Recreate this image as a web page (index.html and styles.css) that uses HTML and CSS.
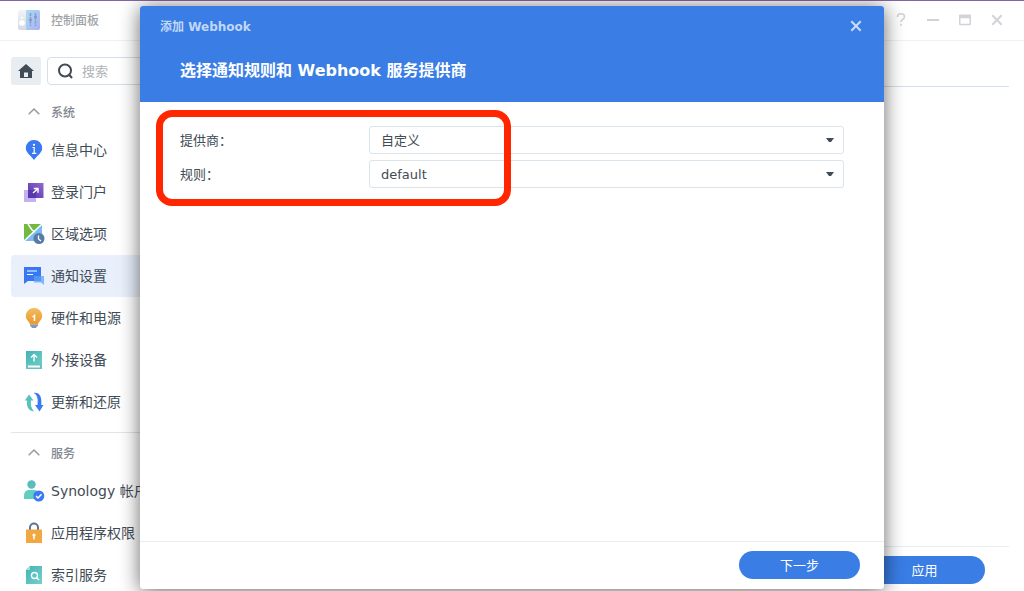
FILE: index.html
```html
<!DOCTYPE html>
<html lang="zh-CN">
<head>
<meta charset="utf-8">
<meta name="viewport" content="width=device-width, initial-scale=1">
<title>控制面板</title>
<link rel="stylesheet" href="styles.css">
</head>
<body>
<div class="window">
  <header class="titlebar">
    <svg class="app-icon" viewBox="0 0 22 20" aria-hidden="true">
      <defs>
        <linearGradient id="panel" x1="0" y1="0" x2="1" y2="1"><stop offset="0" stop-color="#a9ddf2"/><stop offset="1" stop-color="#a9b1f2"/></linearGradient>
        <linearGradient id="plate" x1="0" y1="0" x2="0" y2="1"><stop offset="0" stop-color="#f2f4f8"/><stop offset="1" stop-color="#d5d9e4"/></linearGradient>
      </defs>
      <rect width="22" height="20" rx="2" fill="url(#plate)"/>
      <path d="M8 0h12a2 2 0 0 1 2 2v16a2 2 0 0 1-2 2H8z" fill="url(#panel)"/>
      <circle cx="4" cy="13" r="2.800" fill="#fff"/><circle cx="4" cy="8" r="1" fill="#fff"/>
      <path d="M12.500 3v13M17.500 3v13" stroke="#8f9bc9" stroke-width="1.600" stroke-dasharray="3 .8" fill="none"/>
      <path d="M11 10h3M16 7h3" stroke="#8390c2" stroke-width="1.500" fill="none"/>
    </svg>
    <h1 class="app-title">控制面板</h1>
    <div class="window-controls">
      <button type="button" aria-label="帮助"><svg viewBox="0 0 14 14"><path d="M3.500 4Q3.500 .8 7 .8t3.500 2.700Q10.500 5.500 8.500 6.500 7 7.500 7 9M7 10.800v2" stroke-width="1.600"/></svg></button>
      <button type="button" aria-label="最小化"><svg viewBox="0 0 14 14"><path d="M1 7h12"/></svg></button>
      <button type="button" aria-label="最大化"><svg viewBox="0 0 14 14"><rect x="1.750" y="2.500" width="10.500" height="9" rx=".5" stroke-width="1.500"/><path d="M1 3.500h12" stroke-width="3.500"/></svg></button>
      <button type="button" aria-label="关闭"><svg viewBox="0 0 14 14"><path d="M2.300 2.300l9.400 9.400M11.700 2.300l-9.400 9.400"/></svg></button>
    </div>
  </header>

  <div class="workspace">
    <nav class="sidebar">
      <div class="toolbar">
        <button class="home" type="button" aria-label="主页"><svg viewBox="0 0 16 14"><path d="M8 0l8 7h-2v7H2V7H0z" fill="#414b55"/><path d="M6 8.500h4V13H6z" fill="#e8edf1"/></svg></button>
        <label class="search">
          <svg viewBox="0 0 16 16" aria-hidden="true"><circle cx="7" cy="7.500" r="6" fill="none" stroke="#414b55" stroke-width="2"/><path d="M10.500 11l3.500 4" stroke="#414b55" stroke-width="2"/></svg>
          <input type="text" placeholder="搜索" aria-label="搜索">
        </label>
      </div>

      <section class="group">
        <button class="group-title" type="button"><svg viewBox="0 0 12 7" aria-hidden="true"><path d="M.7 6.300L6 1l5.300 5.300" fill="none" stroke="#939aa1" stroke-width="1.500"/></svg><span>系统</span></button>
        <a class="item" href="#info">
          <svg viewBox="0 0 20 20" aria-hidden="true"><path d="M10 0a8 8 0 0 1 8.200 8C18.200 13 13 15.500 10 20 7 15.500 1.800 13 1.800 8A8 8 0 0 1 10 0z" fill="#3b78f2"/><circle cx="10" cy="4.800" r="1.100" fill="#fff"/><path d="M8.500 7.500h1.700V13M8 13.300h4.300" fill="none" stroke="#fff" stroke-width="1.200"/></svg>
          <span>信息中心</span></a>
        <a class="item" href="#portal">
          <svg viewBox="0 0 20 20" aria-hidden="true"><defs><linearGradient id="violet" x1="0" y1="1" x2="1" y2="0"><stop offset="0" stop-color="#5034aa"/><stop offset="1" stop-color="#9668cf"/></linearGradient></defs><path d="M0 8h12v12H0z" fill="#c5b0f4"/><path d="M4 1h15.500v15H4z" fill="url(#violet)"/><path d="M4 8h8v8H4z" fill="#5639ad"/><path d="M9 11l5-4.500M9.800 6.500H14v4.200" fill="none" stroke="#fff" stroke-width="1.400"/></svg>
          <span>登录门户</span></a>
        <a class="item" href="#region">
          <svg viewBox="0 0 20 20" aria-hidden="true"><path d="M0 0h18v17H0z" fill="#7dbcf3"/><path d="M0 17V0h18z" fill="#72b93f"/><path d="M0 17L18 0M4 0l4 6 3 2" fill="none" stroke="#fff" stroke-width="1.500"/><circle cx="15" cy="14.500" r="5.500" fill="#587ba5"/><path d="M14.500 11.500V15l2.500 2" fill="none" stroke="#fff" stroke-width="1.300"/></svg>
          <span>区域选项</span></a>
        <a class="item selected" href="#notify" aria-current="page">
          <svg viewBox="0 0 20 20" aria-hidden="true"><path d="M0 1h17v14H4l-4 3z" fill="#3978f3"/><path d="M3 5h10M3 8.500h6" stroke="#fff" stroke-width="1.200"/><path d="M10 10h10v9l-3-2.500h-7z" fill="#7eb8fc"/><path d="M10 10h7v5h-7z" fill="#5796ed"/></svg>
          <span>通知设置</span></a>
        <a class="item" href="#hardware">
          <svg viewBox="0 0 20 20" aria-hidden="true"><defs><linearGradient id="amber" x1="0" y1="0" x2="0" y2="1"><stop offset="0" stop-color="#f0bd60"/><stop offset="1" stop-color="#ec982e"/></linearGradient></defs><path d="M10 0a8 8 0 0 1 8.200 8c0 4-4 6-4.200 8.500H6C5.800 14 1.800 12 1.800 8A8 8 0 0 1 10 0z" fill="url(#amber)"/><path d="M6 16.500h8v1.800h-1L12 20H8l-1-1.700H6z" fill="#8799b0"/><path d="M8.500 9l2-1.500V13" fill="none" stroke="#fff" stroke-width="1.500"/></svg>
          <span>硬件和电源</span></a>
        <a class="item" href="#external">
          <svg viewBox="0 0 20 20" aria-hidden="true"><defs><linearGradient id="teal" x1="0" y1="0" x2="1" y2="1"><stop offset="0" stop-color="#43b2b5"/><stop offset="1" stop-color="#75d1cb"/></linearGradient></defs><path d="M2 1h16v18H2z" fill="url(#teal)"/><path d="M2 13.500h16V19H2z" fill="#65c4c1"/><path d="M4 16.500h12" stroke="#fff" stroke-width="2"/><path d="M10 11.500V5M7 7.500l3-3 3 3" fill="none" stroke="#fff" stroke-width="1.400"/></svg>
          <span>外接设备</span></a>
        <a class="item" href="#update">
          <svg viewBox="0 0 20 20" aria-hidden="true"><path d="M5 2.500l4.500 6H7c-.5 4 0 7.500 3 11C4 19 2.500 14 3 8.500H.8z" fill="#56c3bd"/><path d="M9.500 .8C16 0 18 5 17.300 13h2.200l-4 6.500-4.500-6.500h2.500C14.200 7 13.500 3 9.500 .8z" fill="#3c7af2"/></svg>
          <span>更新和还原</span></a>
      </section>

      <section class="group divided">
        <button class="group-title" type="button"><svg viewBox="0 0 12 7" aria-hidden="true"><path d="M.7 6.300L6 1l5.300 5.300" fill="none" stroke="#939aa1" stroke-width="1.500"/></svg><span>服务</span></button>
        <a class="item" href="#account">
          <svg viewBox="0 0 20 20" aria-hidden="true"><circle cx="7.500" cy="3.500" r="4.200" fill="#5bbdba"/><path d="M0 18v-3c0-4 2-6 5-6h5c3 0 5 2 5 6v3z" fill="#62cec3"/><circle cx="14.800" cy="15" r="5.500" fill="#3d79f2"/><path d="M12 15l2 2 3.500-3.700" fill="none" stroke="#fff" stroke-width="1.500"/></svg>
          <span>Synology 帐户</span></a>
        <a class="item" href="#privileges">
          <svg viewBox="0 0 20 20" aria-hidden="true"><path d="M6 8V4.500a4 4 0 0 1 8 0V8" fill="none" stroke="#5b7599" stroke-width="2"/><path d="M2 6.500h16V20H2z" fill="#f1a840"/><circle cx="10" cy="12" r="1.600" fill="#fff"/><path d="M10 12v4.500" stroke="#fff" stroke-width="1.500"/></svg>
          <span>应用程序权限</span></a>
        <a class="item" href="#index">
          <svg viewBox="0 0 20 20" aria-hidden="true"><path d="M6 1h12v18H2V5z" fill="url(#teal)"/><path d="M2 5h4V1z" fill="#a4dfdc"/><circle cx="10.500" cy="10.500" r="3" fill="none" stroke="#fff" stroke-width="1.300"/><path d="M12.500 12.500l2.500 2.500" stroke="#fff" stroke-width="1.300"/></svg>
          <span>索引服务</span></a>
      </section>
    </nav>

    <main class="content">
      <div class="tabs"></div>
      <footer class="content-footer"><button class="primary" type="button">应用</button></footer>
    </main>
  </div>
</div>

<div class="dialog" role="dialog" aria-labelledby="dialog-title">
  <header class="dialog-header">
    <div class="dialog-bar">
      <span>添加 Webhook</span>
      <button class="dialog-close" type="button" aria-label="关闭对话框"><svg viewBox="0 0 14 14"><path d="M2.300 2.300l9.400 9.400M11.700 2.300l-9.400 9.400" stroke="#cddefa" stroke-width="2"/></svg></button>
    </div>
    <h2 id="dialog-title">选择通知规则和 Webhook 服务提供商</h2>
  </header>
  <form class="dialog-body">
    <div class="field">
      <label for="provider">提供商：</label>
      <div class="select"><select id="provider"><option>自定义</option></select><svg viewBox="0 0 8 4" aria-hidden="true"><path d="M0 0h8L5 4H3z" fill="#414b55"/></svg></div>
    </div>
    <div class="field">
      <label for="rule">规则：</label>
      <div class="select"><select id="rule"><option>default</option></select><svg viewBox="0 0 8 4" aria-hidden="true"><path d="M0 0h8L5 4H3z" fill="#414b55"/></svg></div>
    </div>
    <div class="highlight" aria-hidden="true"></div>
  </form>
  <footer class="dialog-footer"><button class="primary" type="button">下一步</button></footer>
</div>
</body>
</html>
```
FILE: styles.css
```css
* {
  box-sizing: border-box;
}

body {
  margin: 0;
  height: 100vh;
  overflow: hidden;
  position: relative;
  background: #fff;
  color: #414b55;
  font-family: "DejaVu Sans", "Noto Sans CJK SC", sans-serif;
  font-size: 13px;
}

button,
input,
select {
  font: inherit;
  color: inherit;
}

button {
  border: 0;
  padding: 0;
  background: none;
}

svg {
  display: block;
  flex: none;
  overflow: visible;
}

h1,
h2 {
  margin: 0;
}

.window {
  height: 100%;
  display: flex;
  flex-direction: column;
  border-top: 1px solid #8365a5;
}

.titlebar {
  flex: none;
  height: 40px;
  display: flex;
  align-items: center;
  gap: 11px;
  padding: 0 20px 2px 18px;
  border-bottom: 1px solid #eff1f4;
}

.app-icon {
  width: 22px;
  height: 20px;
}

.app-title {
  flex: 1;
  font-size: 12px;
  font-weight: 500;
  color: #a0a4a9;
}

.window-controls {
  display: flex;
  gap: 18px;
}

.window-controls svg,
.dialog-close svg {
  width: 14px;
  height: 14px;
}

.window-controls path,
.window-controls rect {
  fill: none;
  stroke: #d1d3d7;
}

.window-controls svg {
  stroke-width: 2px;
}

.workspace {
  flex: 1;
  min-height: 0;
  display: flex;
}

.sidebar {
  flex: none;
  width: 240px;
  padding: 16px 0 0 11px;
  overflow: hidden;
}

.toolbar {
  display: flex;
  gap: 6px;
  height: 28px;
  margin-bottom: 11px;
}

.home {
  width: 30px;
  display: grid;
  place-items: center;
  border-radius: 3px;
  background: #e8edf1;
}

.home svg {
  width: 16px;
  height: 14px;
}

.search {
  flex: 1;
  display: flex;
  align-items: center;
  gap: 8px;
  padding: 0 10px;
  border: 1px solid #d5e0ec;
  border-radius: 4px;
}

.search svg {
  width: 16px;
  height: 16px;
}

.search input {
  width: 100%;
  min-width: 0;
  padding: 0;
  border: 0;
  outline: 0;
  background: none;
}

.search input::placeholder {
  color: #aeb3b8;
}

.group-title {
  display: flex;
  align-items: center;
  gap: 11px;
  height: 33px;
  padding: 0 0 2px 17px;
  font-size: 12px;
  font-weight: 500;
  color: #80878f;
}

.group-title svg {
  width: 12px;
  height: 7px;
}

.divided {
  margin-top: 9px;
  padding-top: 4px;
  border-top: 1px solid #dfe5ea;
}

.item {
  display: flex;
  align-items: center;
  gap: 7px;
  height: 42px;
  padding-left: 13px;
  border-radius: 4px;
  font-size: 14px;
  white-space: nowrap;
  color: inherit;
  text-decoration: none;
}

.item span,
.field label {
  padding-bottom: 2px;
}

.item svg {
  width: 20px;
  height: 20px;
}

.selected {
  background: #e9f0fc;
}

.content {
  flex: 1;
  display: flex;
  flex-direction: column;
  justify-content: space-between;
  padding: 0 15px 7px 16px;
}

.tabs {
  height: 46px;
  border-bottom: 1px solid #d5dfea;
}

.content-footer {
  display: flex;
  justify-content: flex-end;
  padding: 9px 24px 0 0;
  border-top: 1px solid #e7edf4;
}

.primary {
  width: 121px;
  height: 28px;
  padding-bottom: 2px;
  border-radius: 14px;
  background: #397de5;
  color: #fff;
}

.dialog {
  position: absolute;
  inset: 6px 140px 2px 140px;
  display: flex;
  flex-direction: column;
  border-radius: 3px;
  background: #fff;
  box-shadow: 0 2px 20px rgba(0, 0, 0, 0.6);
}

.dialog-header {
  flex: none;
  height: 96px;
  border-radius: 3px 3px 0 0;
  background: #397de5;
  color: #fff;
}

.dialog-bar {
  display: flex;
  align-items: center;
  justify-content: space-between;
  height: 40px;
  padding: 0 21px 0 20px;
  font-size: 12px;
  font-weight: 700;
  color: #c0d7f8;
}

.dialog-bar span {
  padding-bottom: 2px;
}

.dialog-header h2 {
  padding-left: 40px;
  font-size: 16px;
  line-height: 50px;
}

.dialog-body {
  flex: 1;
  position: relative;
  display: flex;
  flex-direction: column;
  gap: 6px;
  padding: 24px 40px;
}

.field {
  display: flex;
  align-items: center;
  height: 28px;
}

.field label {
  flex: none;
  width: 189px;
}

.select {
  flex: 1;
  display: grid;
  align-items: center;
}

.select select,
.select svg {
  grid-area: 1 / 1;
}

.select select {
  appearance: none;
  width: 100%;
  height: 28px;
  padding: 0 30px 0 11px;
  border: 1px solid #dce4eb;
  border-radius: 3px;
  background: #fff;
}

.select svg {
  justify-self: end;
  width: 8px;
  height: 4px;
  margin-right: 10px;
  pointer-events: none;
}

.highlight {
  position: absolute;
  top: 8px;
  left: 16px;
  width: 355px;
  height: 96px;
  border: 7px solid #ff2600;
  border-radius: 16px;
  pointer-events: none;
}

.dialog-footer {
  flex: none;
  display: flex;
  justify-content: flex-end;
  padding: 9px 24px 10px;
  border-top: 1px solid #e7edf4;
}
```
